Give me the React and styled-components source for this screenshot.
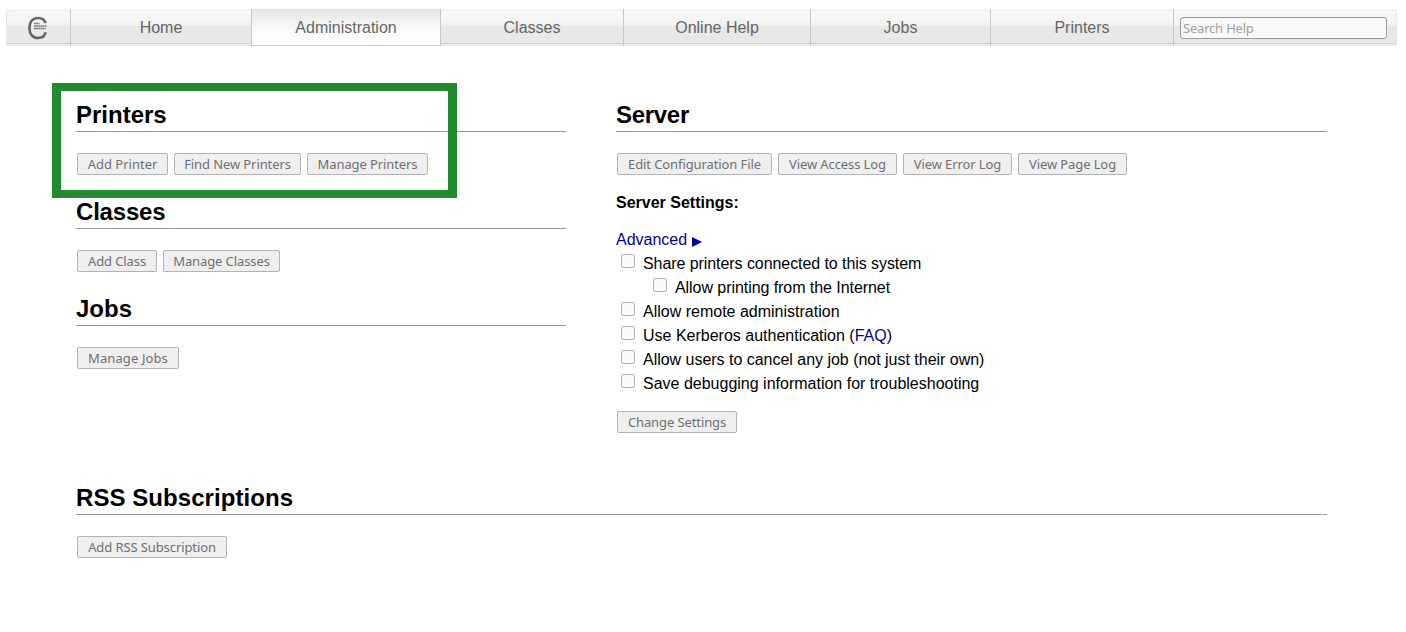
import React from "react";
import styled, { createGlobalStyle } from "styled-components";

const GlobalStyle = createGlobalStyle`
  * { box-sizing: border-box; }
  body {
    margin: 0;
    background: #fff;
    color: #000;
    font: 16px/24px "Liberation Sans", Arial, sans-serif;
  }
`;

const Page = styled.div`
  position: relative;
  width: 1406px;
  height: 632px;
  overflow: hidden;
  padding: 9px 9px 0 6px;
`;

const NavBar = styled.nav`
  display: flex;
  height: 37px;
  border-radius: 4px;
  background:
    linear-gradient(#fff0 0 1px, #e9e9e9 1px 2px, #fafafa 2px, #f0f0f0 17px, #e8e8e8 17px, #e8e8e8 34px, #d0d0d0 34px 35px, #ececec 35px);
`;

const Logo = styled.a`
  display: flex;
  flex-shrink: 0;
  align-items: center;
  width: 64px;
  padding-left: 20px;
  border-left: 1px solid #e4e4e4;
  border-radius: 4px 0 0 4px;
`;

const NavItem = styled.a`
  display: flex;
  flex-shrink: 0;
  justify-content: center;
  width: ${(p) => p.$width}px;
  padding-top: 7px;
  border-left: 1px solid #c8c8c8;
  color: #666;
  ${(p) =>
    p.$active &&
    `
    background: linear-gradient(#e4e4e4, #fbfbfb 60%, #fff);
    border-bottom: 1px solid #ccc;
  `}
`;

const SearchCell = styled.form`
  display: flex;
  flex: 1;
  min-width: 0;
  align-items: flex-start;
  padding: 8px 9px 0 6px;
  border-left: 1px solid #c8c8c8;
  border-right: 1px solid #e4e4e4;
  border-radius: 0 4px 4px 0;
`;

const SearchInput = styled.input`
  width: 207px;
  height: 22px;
  padding: 0 2px;
  border: 1px solid #999;
  border-radius: 3px;
  background: #f9f9f9;
  font: 13px "Noto Sans", sans-serif;
  &::placeholder { color: #a0a0a0; opacity: 1; letter-spacing: -0.2px; }
`;

const Main = styled.main`
  padding: 57px 70px 0;
`;

const Columns = styled.div`
  display: grid;
  grid-template-columns: 490px 711px;
  gap: 50px;
  height: 383px;
`;

const Section = styled.section`
  margin-bottom: 25px;
`;

const Heading = styled.h2`
  margin: 0 0 21px;
  height: 29px;
  border-bottom: 1px solid #999;
  font-size: 24px;
  line-height: 24px;
  letter-spacing: ${(p) => p.$spacing || 0}px;
`;

const ButtonRow = styled.div`
  display: flex;
  gap: 6px;
  padding-left: 1px;
`;

const Button = styled.button`
  display: flex;
  justify-content: center;
  width: ${(p) => p.$width}px;
  height: 22px;
  padding: 0;
  border: 1px solid #b3b3b3;
  border-radius: 2px;
  background: #efefef;
  color: #707070;
  font: 13px/21px "Noto Sans", sans-serif;
  letter-spacing: ${(p) => p.$spacing ?? -0.1}px;
  white-space: nowrap;
`;

const SubHeading = styled.h3`
  margin: 16px 0 13px;
  font-size: 16px;
  line-height: 24px;
`;

const Link = styled.a`
  color: #000099;
`;

const Arrow = styled.svg`
  width: 10px;
  height: 10px;
  margin-left: 5px;
  vertical-align: -2px;
`;

const Option = styled.label`
  display: flex;
  height: 24px;
  padding-left: ${(p) => (p.$nested ? 37 : 5)}px;
  letter-spacing: ${(p) => p.$spacing || 0}px;
  white-space: pre;
`;

const Checkbox = styled.input`
  appearance: none;
  width: 14px;
  height: 14px;
  margin: 2px 8px 0 0;
  border: 1px solid #b0b0b0;
  border-radius: 2px;
  background: #f9f9f9;
`;

const Options = styled.div`
  margin-bottom: 15px;
`;

const Highlight = styled.div`
  position: absolute;
  left: 52px;
  top: 83px;
  width: 405px;
  height: 115px;
  border: solid #228b30;
  border-width: 8px 9px;
  pointer-events: none;
`;

const navItems = [
  { label: "Home", width: 181 },
  { label: "Administration", width: 189, active: true },
  { label: "Classes", width: 183 },
  { label: "Online Help", width: 187 },
  { label: "Jobs", width: 180 },
  { label: "Printers", width: 183 },
];

const leftSections = [
  {
    title: "Printers",
    buttons: [
      ["Add Printer", 91, 0],
      ["Find New Printers", 127],
      ["Manage Printers", 121],
    ],
  },
  {
    title: "Classes",
    spacing: -0.2,
    buttons: [
      ["Add Class", 80],
      ["Manage Classes", 117],
    ],
  },
  { title: "Jobs", buttons: [["Manage Jobs", 102, 0.1]] },
];

const serverButtons = [
  ["Edit Configuration File", 155],
  ["View Access Log", 119],
  ["View Error Log", 109],
  ["View Page Log", 109],
];

const options = [
  { text: "Share printers connected to this system", spacing: -0.07 },
  { text: "Allow printing from the Internet", nested: true, spacing: -0.06 },
  { text: "Allow remote administration" },
  { text: <>Use Kerberos authentication (<Link>FAQ</Link>)</> },
  { text: "Allow users to cancel any job (not just their own)", spacing: -0.02 },
  { text: "Save debugging information for troubleshooting" },
];

function Buttons({ items }) {
  return (
    <ButtonRow>
      {items.map(([label, width, spacing]) => (
        <Button key={label} type="button" $width={width} $spacing={spacing}>
          {label}
        </Button>
      ))}
    </ButtonRow>
  );
}

function CupsLogo() {
  return (
    <svg width="22" height="24" viewBox="0 0 22 24">
      <path
        d="M18.600 7.200C17.600 3.800 14.600 2 11.200 2C5.900 2 2.400 6 2.400 12S5.900 22 11.200 22C14.800 22 17.800 20 18.600 16.300"
        fill="none"
        stroke="#666"
        strokeWidth="2.700"
      />
      <path
        d="M7 7.500h5.500M7 10h12.500M7 12.500h11.500"
        stroke="#777"
        strokeWidth="1.400"
        strokeDasharray="1.800 .4"
      />
    </svg>
  );
}

export default function App() {
  return (
    <Page>
      <GlobalStyle />
      <NavBar>
        <Logo><CupsLogo /></Logo>
        {navItems.map((item) => (
          <NavItem key={item.label} $width={item.width} $active={item.active}>
            {item.label}
          </NavItem>
        ))}
        <SearchCell>
          <SearchInput placeholder="Search Help" />
        </SearchCell>
      </NavBar>
      <Main>
        <Columns>
          <div>
            {leftSections.map((s) => (
              <Section key={s.title}>
                <Heading $spacing={s.spacing}>{s.title}</Heading>
                <Buttons items={s.buttons} />
              </Section>
            ))}
          </div>
          <section>
            <Heading $spacing={-0.3}>Server</Heading>
            <Buttons items={serverButtons} />
            <SubHeading>Server Settings:</SubHeading>
            <Link>
              Advanced
              <Arrow viewBox="0 0 10 10"><path d="M0 0L10 5L0 10Z" fill="#000099" /></Arrow>
            </Link>
            <Options>
              {options.map((o, i) => (
                <Option key={i} $nested={o.nested} $spacing={o.spacing}>
                  <Checkbox type="checkbox" />
                  <span>{o.text}</span>
                </Option>
              ))}
            </Options>
            <Buttons items={[["Change Settings", 120]]} />
          </section>
        </Columns>
        <Section>
          <Heading $spacing={0.06}>RSS Subscriptions</Heading>
          <Buttons items={[["Add RSS Subscription", 150]]} />
        </Section>
      </Main>
      <Highlight />
    </Page>
  );
}
